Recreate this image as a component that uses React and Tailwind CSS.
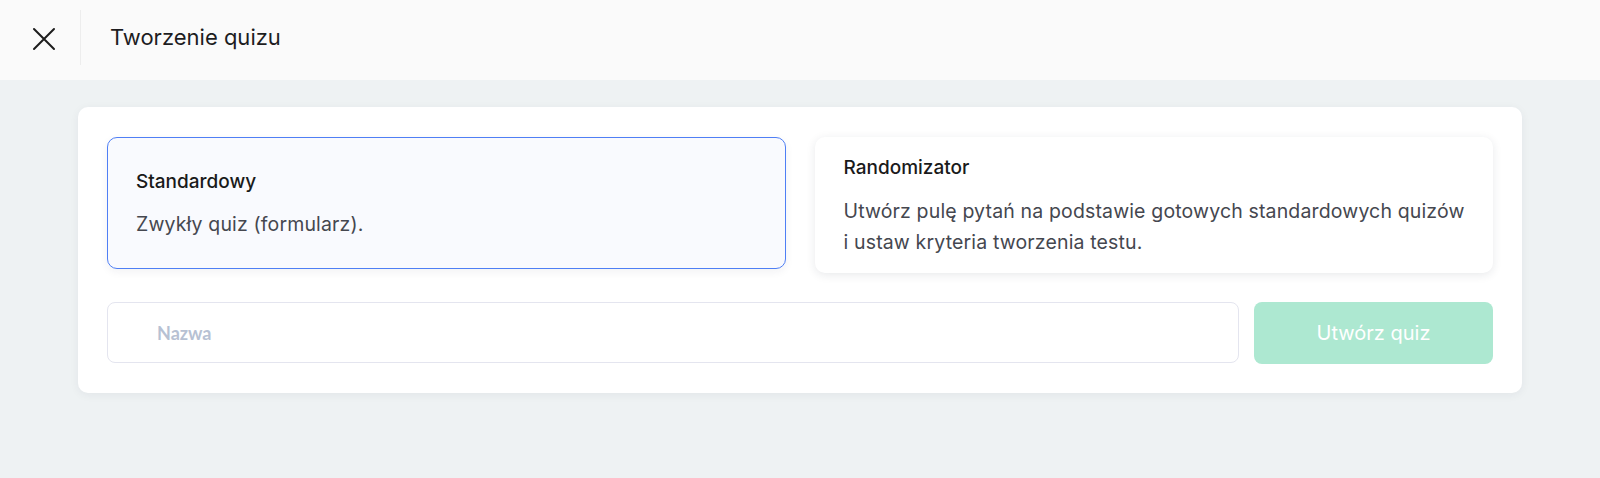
import React, { useState } from "react";

const font = { fontFamily: "Inter, 'Noto Sans', sans-serif" };

const QuizCreator = () => {
    const [type, setType] = useState("standard");
    const [name, setName] = useState("");

    return (
        <div className="min-h-[478px] bg-[#eef2f3]" style={font}>
            {/* header */}
            <div className="flex h-20 items-start bg-[#fafafa] pt-[10px]">
                <button className="flex h-[55px] w-[81px] items-center justify-center border-r border-[#ededed] pt-[2px] pl-2">
                    <svg width="24" height="24" viewBox="0 0 24 24" fill="none" stroke="#1c1c1c" strokeWidth="2" strokeLinecap="round">
                        <path d="M2 2 L22 22 M22 2 L2 22" />
                    </svg>
                </button>
                <h1 className="flex h-[55px] items-center pl-[29px] text-[22px] font-normal text-[#1d1d1f]">Tworzenie quizu</h1>
            </div>

            <div className="px-[78px] pt-[27px]">
                <div className="rounded-[10px] bg-white px-[29px] pt-[30px] pb-[29px] shadow-[0_2px_10px_rgba(30,40,60,0.06)]">
                    <div className="flex items-start gap-[29px]">
                        <div
                            onClick={() => setType("standard")}
                            className={
                                type === "standard"
                                    ? "min-w-0 flex-1 cursor-pointer rounded-[10px] border border-[#4f7ff5] bg-[#f9fafe] px-7 py-7 shadow-[0_3px_8px_rgba(30,40,60,0.06)]"
                                    : "min-w-0 flex-1 cursor-pointer rounded-[10px] border border-transparent bg-white px-7 py-7 shadow-[0_2px_10px_rgba(30,40,60,0.1)]"
                            }
                        >
                            <p className="text-[19px] leading-[31px] font-medium text-[#1a1a1a]">Standardowy</p>
                            <p className="mt-3 text-[19.5px] leading-[31px] tracking-[0.15px] text-[#45474f]">Zwykły quiz (formularz).</p>
                        </div>
                        <div
                            onClick={() => setType("random")}
                            className={
                                type === "random"
                                    ? "min-w-0 flex-1 cursor-pointer rounded-[10px] border border-[#4f7ff5] bg-[#f9fafe] px-7 py-[14px]"
                                    : "min-w-0 flex-1 cursor-pointer rounded-[10px] border border-transparent bg-white px-7 py-[14px] shadow-[0_2px_10px_rgba(30,40,60,0.1)]"
                            }
                        >
                            <p className="text-[19px] leading-[31px] font-medium text-[#1a1a1a]">Randomizator</p>
                            <p className="mt-[13px] whitespace-nowrap text-[19.5px] leading-[31px] tracking-[0.15px] text-[#45474f]">
                                Utwórz pulę pytań na podstawie gotowych standardowych quizów
                                <br />
                                i ustaw kryteria tworzenia testu.
                            </p>
                        </div>
                    </div>

                    <div className="mt-[29px] flex gap-[15px]">
                        <input
                            type="text"
                            value={name}
                            onChange={(e) => setName(e.target.value)}
                            placeholder="Nazwa"
                            className="h-[61px] flex-1 rounded-lg border border-[#e4e5ef] bg-white pl-[49px] text-[18px] font-bold text-[#333] outline-none placeholder:text-[#b7c1d3]"
                            style={{ fontFamily: "Lato, 'Noto Sans', sans-serif" }}
                        />
                        <button
                            disabled={!name}
                            className="h-[62px] w-[239px] rounded-lg bg-[#ade8d1] text-[20px] font-normal text-white"
                        >
                            Utwórz quiz
                        </button>
                    </div>
                </div>
            </div>
        </div>
    );
};

export default QuizCreator;
